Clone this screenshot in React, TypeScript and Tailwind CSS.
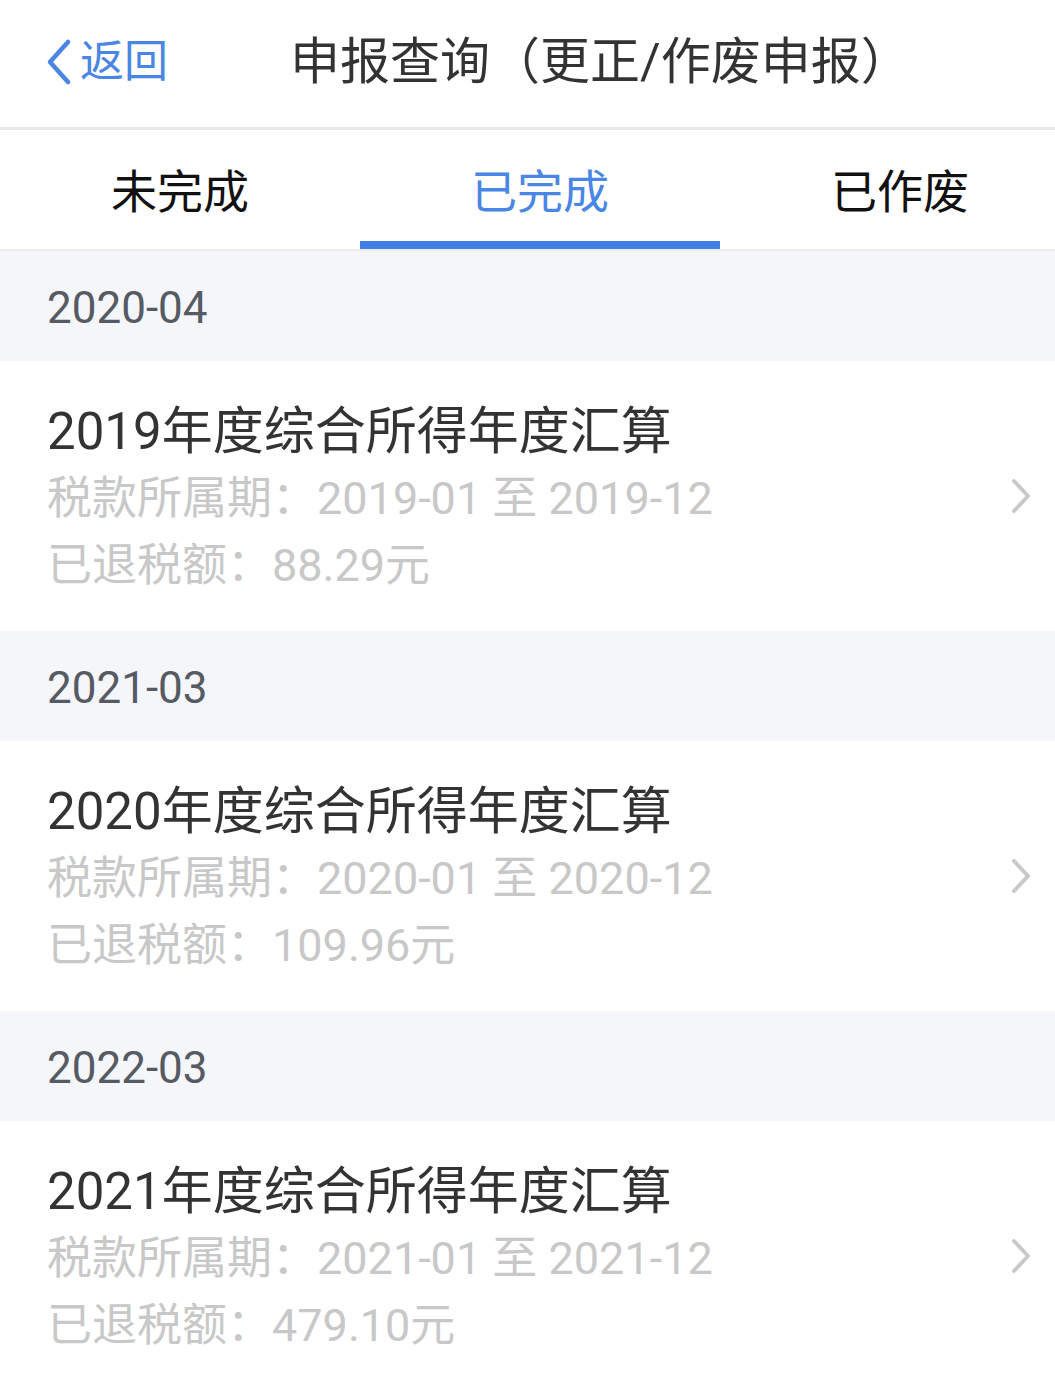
import React from "react";

const FONT = { fontFamily: 'Roboto, "Noto Sans CJK SC", "Noto Sans", sans-serif' };

const items = [
  { month: "2020-04", year: "2019", amount: "88.29" },
  { month: "2021-03", year: "2020", amount: "109.96" },
  { month: "2022-03", year: "2021", amount: "479.10" },
];

function Chevron() {
  return (
    <svg width="24" height="36" viewBox="0 0 24 36" fill="none">
      <path d="M5 3 L19 18 L5 33" stroke="#c9c9c9" strokeWidth="4" strokeLinecap="round" strokeLinejoin="round" />
    </svg>
  );
}

export default function App() {
  return (
    <div className="w-[1055px] h-[1377px] overflow-hidden bg-white" style={FONT}>
      {/* header */}
      <div className="h-[127px] flex items-center pb-[4px]">
        <div className="flex items-center pl-[44px] text-[#4a86e4]">
          <svg width="30" height="48" viewBox="0 0 30 48" fill="none">
            <path d="M24 4 L6 24 L24 44" stroke="#4a86e4" strokeWidth="4.5" strokeLinecap="round" strokeLinejoin="round" />
          </svg>
          <span className="text-[44px] leading-none ml-[6px]">返回</span>
        </div>
        <div className="ml-[122px] text-[50px] leading-none text-[#333333]">申报查询（更正/作废申报）</div>
      </div>
      <div className="h-[3px] bg-[#e8e8e8]" />
      {/* tabs */}
      <div className="h-[119px] flex overflow-hidden pt-[5px]">
        <div className="w-[360px] shrink-0 flex items-center justify-center text-[46px] text-[#111111]">未完成</div>
        <div className="w-[360px] shrink-0 relative flex items-center justify-center text-[46px] text-[#4a86e4]">
          已完成
          <div className="absolute left-0 right-0 bottom-0 h-[8px] bg-[#3f7fe6]" />
        </div>
        <div className="w-[360px] shrink-0 flex items-center justify-center text-[46px] text-[#111111]">已作废</div>
      </div>
      <div className="h-[2px] bg-[#ececec]" />
      {items.map((it) => (
        <div key={it.month}>
          <div className="h-[110px] bg-[#f5f6fa] flex items-center pl-[47px] pt-[3px] text-[44px] text-[#555a63]">
            {it.month}
          </div>
          <div className="h-[270px] bg-white flex items-center justify-between pl-[47px] pr-[22px]">
            <div className="flex flex-col pt-[5px]">
              <div className="text-[51px] leading-[67px] text-[#333333]">{it.year}年度综合所得年度汇算</div>
              <div className="text-[45px] leading-[67px] text-[#c8c8c8]">
                税款所属期：{it.year}-01 至 {it.year}-12
              </div>
              <div className="text-[45px] leading-[67px] text-[#c8c8c8]">已退税额：{it.amount}元</div>
            </div>
            <Chevron />
          </div>
        </div>
      ))}
    </div>
  );
}
